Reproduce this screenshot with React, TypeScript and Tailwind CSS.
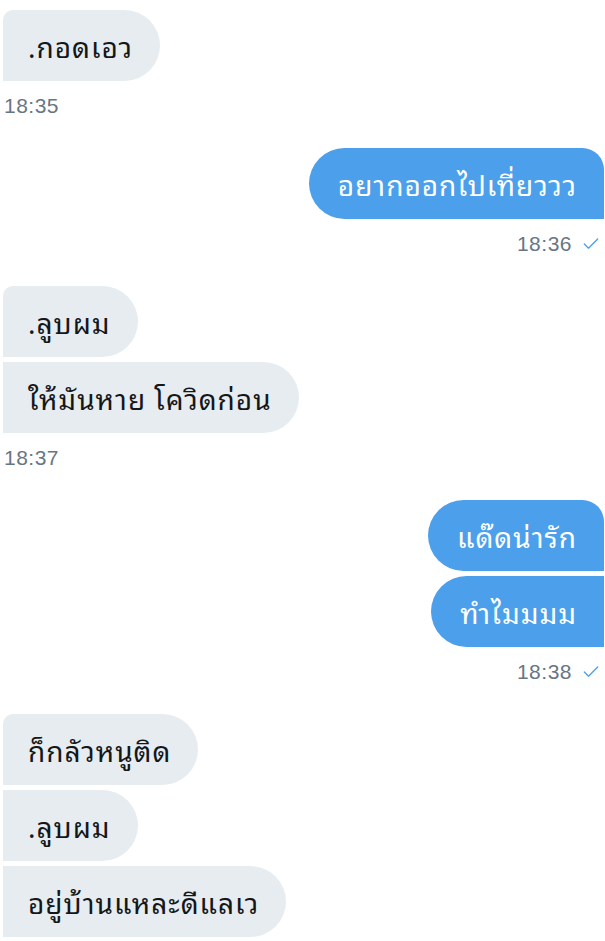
import { Check } from "lucide-react";

type Msg = { text: string; first?: boolean };
type Group = { side: "in" | "out"; time: string; items: Msg[] };

const groups: Group[] = [
  { side: "in", time: "18:35", items: [{ text: ".กอดเอว", first: true }] },
  { side: "out", time: "18:36", items: [{ text: "อยากออกไปเที่ยววว", first: true }] },
  {
    side: "in",
    time: "18:37",
    items: [{ text: ".ลูบผม", first: true }, { text: "ให้มันหาย โควิดก่อน" }],
  },
  {
    side: "out",
    time: "18:38",
    items: [{ text: "แด๊ดน่ารัก", first: true }, { text: "ทำไมมมม" }],
  },
  {
    side: "in",
    time: "",
    items: [{ text: "ก็กลัวหนูติด", first: true }, { text: ".ลูบผม" }, { text: "อยู่บ้านแหละดีแลเว" }],
  },
];

function Bubble({ msg, side }: { msg: Msg; side: "in" | "out" }) {
  if (side === "in") {
    return (
      <div
        className={`flex h-[71px] items-center self-start rounded-r-[36px] bg-[#e6ecf0] pl-[25px] pr-[27px] text-[#14171a] ${
          msg.first ? "rounded-tl-[10px]" : ""
        }`}
      >
        {msg.text}
      </div>
    );
  }
  return (
    <div
      className={`flex h-[71px] items-center self-end rounded-l-[36px] bg-[#4c9fea] pl-[29px] pr-[27px] text-white ${
        msg.first ? "rounded-tr-[22px]" : ""
      }`}
    >
      {msg.text}
    </div>
  );
}

export default function App() {
  return (
    <div
      className="flex h-[941px] w-[605px] flex-col overflow-hidden bg-white pl-[3px] pr-[1px] pt-[10px] text-[28px] tracking-[1px]"
      style={{ fontFamily: '"Noto Sans Thai Looped", "Noto Sans Thai", "Noto Sans", "DejaVu Sans", sans-serif' }}
    >
      {groups.map((g, gi) => (
        <div key={gi} className="flex flex-col">
          <div className="flex flex-col gap-[5px]">
            {g.items.map((m, i) => (
              <Bubble key={i} msg={m} side={g.side} />
            ))}
          </div>
          {g.time && (
            <div
              className={`mt-[13px] mb-[30px] flex h-[24px] items-center gap-[9px] text-[21px] leading-[24px] tracking-[0.5px] text-[#687684] ${
                g.side === "in" ? "self-start pl-[1px]" : "self-end pr-[3px]"
              }`}
              style={{ fontFamily: '"Liberation Sans", Arial, sans-serif' }}
            >
              <span>{g.time}</span>
              {g.side === "out" && <Check className="h-[20px] w-[20px] text-[#4c9fea]" strokeWidth={1.6} />}
            </div>
          )}
        </div>
      ))}
    </div>
  );
}
